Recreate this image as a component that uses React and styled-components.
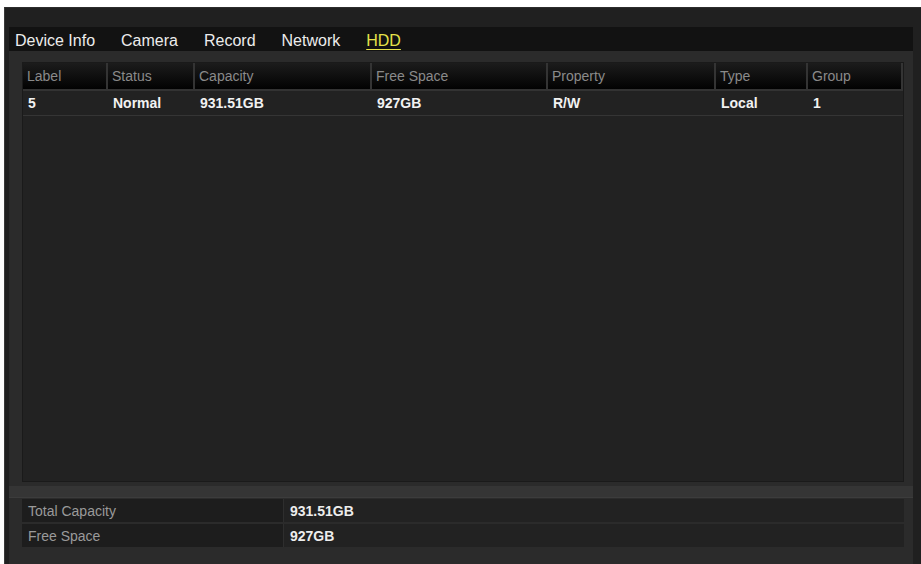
import React from "react";
import styled, { createGlobalStyle } from "styled-components";

const GlobalStyle = createGlobalStyle`
  body {
    margin: 0;
    background: #ffffff;
    font-family: "Liberation Sans", Arial, sans-serif;
  }
`;

const Frame = styled.div`
  margin: 7px 0 0 4px;
  height: 557px;
  background: #202020;
  border-left: 1px solid #3a3a3a;
  border-top: 1px solid #2c2c2c;
  box-sizing: border-box;
  padding-top: 19px;
  display: flex;
  flex-direction: column;
`;

const TabBar = styled.div`
  margin: 0 8px 0 4px;
  height: 24px;
  box-sizing: border-box;
  padding: 3px 0 0 6px;
  background: #121212;
  display: flex;
  align-items: center;
  gap: 26px;
`;

const Tab = styled.span`
  font-size: 16px;
  color: ${(p) => (p.active ? "#e6e24a" : "#ececec")};
  text-decoration: ${(p) => (p.active ? "underline" : "none")};
  text-underline-offset: 3px;
`;

const Body = styled.div`
  flex: 1;
  margin: 0 8px 0 4px;
  background: #2b2b2b;
  padding: 11px 9px 17px 13px;
  display: flex;
  flex-direction: column;
`;

const TableBox = styled.div`
  flex: 1;
  background: #222222;
  border: 1px solid #1a1a1a;
  display: flex;
  flex-direction: column;
`;

const Grid = styled.div`
  display: grid;
  grid-template-columns: 85px 87px 177px 176px 168px 92px 1fr;
`;

const HeadCell = styled.div`
  height: 26px;
  background: linear-gradient(#1c1c1c, #020202);
  border-right: 2px solid #343434;
  border-bottom: 2px solid #333333;
  color: #8a8a8a;
  font-size: 14px;
  display: flex;
  align-items: center;
  padding-left: 4px;
`;

const Cell = styled.div`
  height: 24px;
  border-bottom: 1px solid #353535;
  color: #f2f2f2;
  font-size: 14px;
  font-weight: bold;
  display: flex;
  align-items: center;
  padding-left: 5px;
`;

const Gap = styled.div`
  height: 11px;
  margin: 4px -9px 1px -13px;
  background: #353535;
  border-bottom: 1px solid #3c3c3c;
`;

const Summary = styled.div`
  display: grid;
  grid-template-columns: 262px 1fr;
  row-gap: 2px;
  background: #2b2b2b;
`;

const SumLabel = styled.div`
  height: 23px;
  background: #1d1d1d;
  color: #9a9a9a;
  font-size: 14px;
  display: flex;
  align-items: center;
  padding-left: 6px;
  border-right: 1px solid #2e2e2e;
`;

const SumValue = styled.div`
  height: 23px;
  background: #222222;
  color: #ededed;
  font-size: 14px;
  font-weight: bold;
  display: flex;
  align-items: center;
  padding-left: 6px;
`;

const tabs = ["Device Info", "Camera", "Record", "Network", "HDD"];
const headers = ["Label", "Status", "Capacity", "Free Space", "Property", "Type", "Group"];
const rows = [["5", "Normal", "931.51GB", "927GB", "R/W", "Local", "1"]];

const App = () => {
  return (
    <>
      <GlobalStyle />
      <Frame>
        <TabBar>
          {tabs.map((t) => (
            <Tab key={t} active={t === "HDD"}>
              {t}
            </Tab>
          ))}
        </TabBar>
        <Body>
          <TableBox>
            <Grid>
              {headers.map((h) => (
                <HeadCell key={h}>{h}</HeadCell>
              ))}
              {rows.map((r) =>
                r.map((c, i) => <Cell key={i}>{c}</Cell>)
              )}
            </Grid>
          </TableBox>
          <Gap />
          <Summary>
            <SumLabel>Total Capacity</SumLabel>
            <SumValue>931.51GB</SumValue>
            <SumLabel>Free Space</SumLabel>
            <SumValue>927GB</SumValue>
          </Summary>
        </Body>
      </Frame>
    </>
  );
};

export default App;
